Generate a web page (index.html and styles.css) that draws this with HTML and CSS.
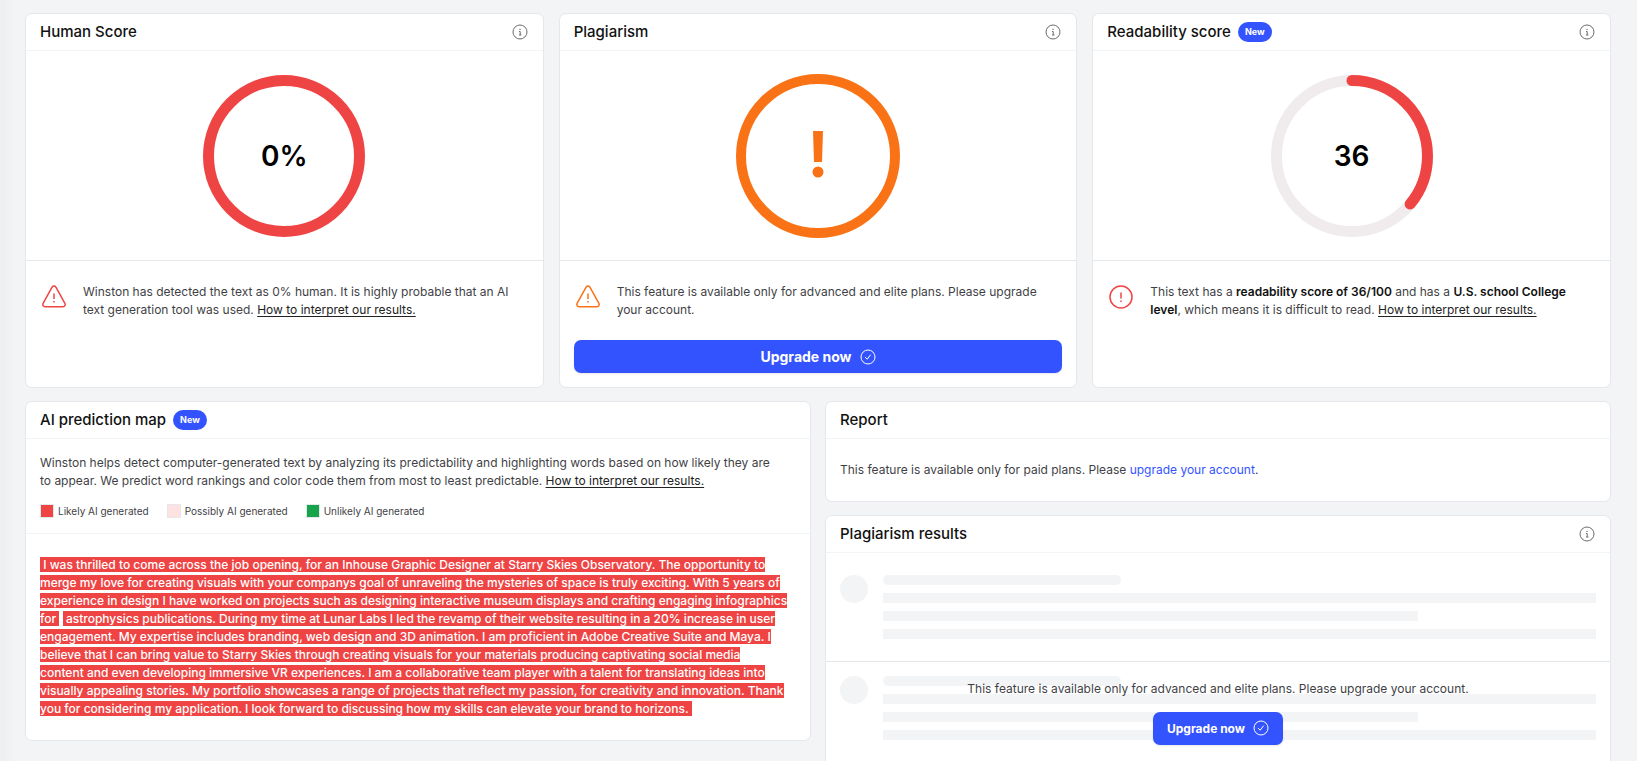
FILE: index.html
```html
<!DOCTYPE html>
<html lang="en">
<head>
	<meta charset="utf-8">
	<title>Scan results</title>
	<link rel="stylesheet" href="styles.css">
</head>
<body>
	<!-- shared icons -->
	<svg width="0" height="0" class="sprite">
		<symbol id="info" viewBox="0 0 16 16">
			<circle cx="8" cy="8" r="7" fill="none" stroke="currentColor"/>
			<path d="M7 7.5h1.2v3.5M7 11h2.4" fill="none" stroke="currentColor"/>
			<circle cx="8" cy="5.4" r="0.7" fill="currentColor"/>
		</symbol>
		<symbol id="check" viewBox="0 0 16 16">
			<circle cx="8" cy="8" r="7" fill="none" stroke="currentColor"/>
			<path d="M5.4 8.4l1.8 1.8 3.2-4.2" fill="none" stroke="currentColor" stroke-linecap="round" stroke-linejoin="round"/>
		</symbol>
		<symbol id="warning" viewBox="0 0 28 28">
			<path d="M12.1 4.2L3.1 20.4a2.2 2.2 0 0 0 1.9 3.3h18a2.2 2.2 0 0 0 1.9-3.3L15.9 4.2a2.2 2.2 0 0 0-3.8 0z" fill="none" stroke="currentColor" stroke-width="1.5"/>
			<path d="M14 10.5v5.5M14 18v1.5" fill="none" stroke="currentColor" stroke-width="1.5"/>
		</symbol>
	</svg>

	<main class="page">
		<div class="scores">
			<section class="card">
				<header class="card-header">
					<h2>Human Score</h2>
					<button class="info" type="button" aria-label="Info"><svg><use href="#info"/></svg></button>
				</header>
				<div class="chart">
					<svg class="ring" viewBox="0 0 164 164">
						<circle cx="82" cy="82" r="75.5" fill="none" stroke="#ef4444" stroke-width="11"/>
					</svg>
					<span class="value">0%</span>
				</div>
				<div class="card-footer">
					<div class="note">
						<svg class="note-icon red"><use href="#warning"/></svg>
						<p>Winston has detected the text as 0% human. It is highly probable that an AI text generation tool was used. <a class="more" href="#">How to interpret our results.</a></p>
					</div>
				</div>
			</section>

			<section class="card">
				<header class="card-header">
					<h2>Plagiarism</h2>
					<button class="info" type="button" aria-label="Info"><svg><use href="#info"/></svg></button>
				</header>
				<div class="chart">
					<svg class="ring" viewBox="0 0 164 164">
						<circle cx="82" cy="82" r="77" fill="none" stroke="#f97316" stroke-width="10"/>
						<path d="M77 57h10l-1 31h-8z" fill="#f97316"/>
						<circle cx="82" cy="98" r="5.5" fill="#f97316"/>
					</svg>
				</div>
				<div class="card-footer">
					<div class="note">
						<svg class="note-icon orange"><use href="#warning"/></svg>
						<p>This feature is available only for advanced and elite plans. Please upgrade your account.</p>
					</div>
					<button class="upgrade wide" type="button">Upgrade now <svg><use href="#check"/></svg></button>
				</div>
			</section>

			<section class="card">
				<header class="card-header">
					<h2>Readability score</h2>
					<span class="badge">New</span>
					<button class="info" type="button" aria-label="Info"><svg><use href="#info"/></svg></button>
				</header>
				<div class="chart">
					<svg class="ring" viewBox="0 0 164 164">
						<circle cx="82" cy="82" r="75.5" fill="none" stroke="#f0ebec" stroke-width="11"/>
						<circle cx="82" cy="82" r="75.5" fill="none" stroke="#ef4444" stroke-width="11" stroke-linecap="round" pathLength="100" stroke-dasharray="36 100" transform="rotate(-90 82 82)"/>
					</svg>
					<span class="value">36</span>
				</div>
				<div class="card-footer">
					<div class="note">
						<svg class="note-icon red" viewBox="0 0 28 28">
							<circle cx="14" cy="14" r="11" fill="none" stroke="currentColor" stroke-width="1.5"/>
							<path d="M14 9.5v6M14 17.5v1.5" fill="none" stroke="currentColor" stroke-width="1.5"/>
						</svg>
						<p>This text has a <strong>readability score of 36/100</strong> and has a <strong>U.S. school College level</strong>, which means it is difficult to read. <a class="more" href="#">How to interpret our results.</a></p>
					</div>
				</div>
			</section>
		</div>

		<div class="details">
			<section class="card">
				<header class="card-header">
					<h2>AI prediction map</h2>
					<span class="badge">New</span>
				</header>
				<div class="intro">
					<p>Winston helps detect computer-generated text by analyzing its predictability and highlighting words based on how likely they are<br>to appear. We predict word rankings and color code them from most to least predictable. <a class="more" href="#">How to interpret our results.</a></p>
					<ul class="legend">
						<li><i class="likely"></i>Likely AI generated</li>
						<li><i class="possibly"></i>Possibly AI generated</li>
						<li><i class="unlikely"></i>Unlikely AI generated</li>
					</ul>
				</div>
				<p class="map"><mark>&nbsp;I was thrilled to come across the job opening, for an Inhouse Graphic Designer at Starry Skies Observatory. The opportunity to merge my love for creating visuals with your companys goal of unraveling the mysteries of space is truly exciting. With 5 years of experience in design I have worked on projects such as designing interactive museum displays and crafting engaging infographics for&nbsp;</mark> <mark>&nbsp;astrophysics publications. During my time at Lunar Labs I led the revamp of their website resulting in a 20% increase in user engagement. My expertise includes branding, web design and 3D animation. I am proficient in Adobe Creative Suite and Maya. I believe that I can bring value to Starry Skies through creating visuals for your materials producing captivating social media<br>content and even developing immersive VR experiences. I am a collaborative team player with a talent for translating ideas into visually appealing stories. My portfolio showcases a range of projects that reflect my passion, for creativity and innovation. Thank you for considering my application. I look forward to discussing how my skills can elevate your brand to horizons.&nbsp;</mark></p>
			</section>

			<div class="side">
				<section class="card">
					<header class="card-header">
						<h2>Report</h2>
					</header>
					<p class="report">This feature is available only for paid plans. Please <a href="#">upgrade your account</a>.</p>
				</section>

				<section class="card">
					<header class="card-header">
						<h2>Plagiarism results</h2>
						<button class="info" type="button" aria-label="Info"><svg><use href="#info"/></svg></button>
					</header>
					<div class="results">
						<div class="result">
							<div class="avatar"></div>
							<div class="lines"><div></div><div></div><div></div><div></div></div>
						</div>
						<div class="result">
							<div class="avatar"></div>
							<div class="lines"><div></div><div></div><div></div><div></div></div>
						</div>
						<div class="result">
							<div class="avatar"></div>
							<div class="lines"><div></div><div></div><div></div><div></div></div>
						</div>
						<div class="locked">
							<p>This feature is available only for advanced and elite plans. Please upgrade your account.</p>
							<button class="upgrade" type="button">Upgrade now <svg><use href="#check"/></svg></button>
						</div>
					</div>
				</section>
			</div>
		</div>
	</main>
</body>
</html>
```
FILE: styles.css
```css
* {box-sizing: border-box;}
body {
	margin: 0;
	height: 100vh;
	overflow: hidden;
	background: #f3f4f6 linear-gradient(to right, #eeeff1 5px, #f3f4f6 14px);
	font: 12px/18px Inter, "Liberation Sans", sans-serif;
	color: #3f3f46;
}
h2, p, ul {margin: 0;}
button {font-family: inherit; border: 0; cursor: pointer;}
.sprite {position: absolute;}

.page {padding: 13px 26px 13px 25px;}
.scores {display: grid; grid-template-columns: repeat(3, 1fr); gap: 15px;}
.details {display: grid; grid-template-columns: 1fr 1fr; gap: 14px; align-items: start; margin-top: 13px;}
.side {display: grid; gap: 13px;}

.card {background: white; border: 1px solid #e5e7eb; border-radius: 7px;}
.card-header {
	display: flex;
	align-items: center;
	gap: 7px;
	height: 37px;
	padding: 0 15px 0 14px;
	border-bottom: 1px solid #f3f4f6;
}
.card-header h2 {font-size: 15px; line-height: 20px; font-weight: 500; color: #111;}
.badge {
	padding: 0 7px;
	border-radius: 10px;
	background: #3353ff;
	color: white;
	font-size: 9px;
	line-height: 20px;
	font-weight: 700;
}
.info {display: flex; margin-left: auto; padding: 0; background: none; color: #6b6b70;}
.info svg {width: 16px; height: 16px;}

.chart {
	display: grid;
	place-items: center;
	height: 210px;
	border-bottom: 1px solid #e5e7eb;
}
.ring, .value {grid-area: 1 / 1;}
.ring {width: 164px; height: 164px;}
.value {font-size: 28px; line-height: 36px; font-weight: 600; color: #000;}

.card-footer {padding: 22px 14px 14px;}
.note {display: flex; gap: 15px; min-height: 36px;}
.note-icon {flex: none; width: 28px; height: 28px;}
.red {color: #ef4444;}
.orange {color: #f97316;}
.note strong {font-weight: 600; color: #111;}
.more {color: #222; text-decoration: underline; text-underline-offset: 2px;}

.upgrade {
	display: flex;
	align-items: center;
	justify-content: center;
	gap: 8px;
	height: 33px;
	padding: 0 14px;
	border-radius: 7px;
	background: #3353ff;
	color: white;
	font-size: 12px;
	font-weight: 700;
	box-shadow: 0 1px 2px rgba(0, 0, 0, 0.1);
}
.upgrade svg {width: 16px; height: 16px;}
.wide {width: 100%; margin-top: 21px; font-size: 14px;}

.intro {padding: 15px 14px; border-bottom: 1px solid #f3f4f6;}
.legend {display: flex; gap: 18px; margin-top: 14px; padding: 0; list-style: none; font-size: 10px; line-height: 14px;}
.legend li {display: flex; gap: 4px;}
.legend i {width: 14px; height: 14px; border: 1px solid #e5e7eb;}
.likely {background: #ef4444;}
.possibly {background: #fee2e2;}
.unlikely {background: #16a34a;}
.map {padding: 22px 14px;}
.map mark {background: #ef4444; color: white; font-weight: 500;}

.report {padding: 22px 14px;}
.report a {color: #3353ff; text-decoration: none;}

.results {position: relative; padding-bottom: 8px;}
.result {display: flex; gap: 15px; padding: 14px 14px 22px;}
.result:first-child {padding-top: 22px;}
.result + .result {border-top: 1px solid #e5e7eb;}
.avatar {flex: none; width: 28px; height: 28px; border-radius: 50%; background: #f3f4f6;}
.lines {display: grid; flex: 1; gap: 8px;}
.lines div {height: 10px; background: #f3f4f6;}
.lines div:nth-child(1) {width: 33.33%; border-radius: 5px;}
.lines div:nth-child(3) {width: 75%;}

/* sits on top of the placeholder rows */
.locked {
	position: absolute;
	inset: 0;
	display: flex;
	flex-direction: column;
	align-items: center;
	justify-content: center;
	gap: 14px;
}
```
